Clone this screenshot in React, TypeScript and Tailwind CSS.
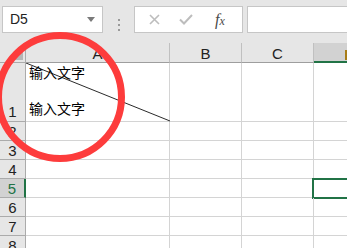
import React from 'react';

const COLS = [
  { key: 'A', w: 'w-[144px]' },
  { key: 'B', w: 'w-[72px]' },
  { key: 'C', w: 'w-[72px]' },
];

const ROWS = [2, 3, 4, 5, 6, 7, 8];

export default function App() {
  return (
    <div
      className="relative w-[347px] h-[248px] overflow-hidden bg-white text-black"
      style={{ fontFamily: '"Liberation Sans", "Noto Sans CJK SC", sans-serif' }}
    >
      <Toolbar />
      <Sheet />
      {/* red annotation circle drawn over the sheet */}
      <svg className="absolute left-0 top-0 pointer-events-none" width="347" height="248">
        <circle cx="60" cy="97" r="61.5" fill="none" stroke="#fd3c3c" strokeWidth="7" />
      </svg>
    </div>
  );
}

function Toolbar() {
  return (
    <div className="flex h-[43px] bg-[#e6e6e6] pt-[6px]">
      <div className="ml-[2px] flex h-[27px] w-[101px] items-center justify-between border border-[#c6c6c6] bg-white pl-[7px] pr-[7px]">
        <span className="text-[14px] text-[#222]">D5</span>
        <svg width="8" height="5" viewBox="0 0 8 5">
          <path d="M0 0 L8 0 L4 5 Z" fill="#7a7a7a" />
        </svg>
      </div>
      <div className="flex w-[31px] flex-col items-center justify-center gap-[3px]">
        <span className="h-[2px] w-[2px] bg-[#9a9a9a]" />
        <span className="h-[2px] w-[2px] bg-[#9a9a9a]" />
        <span className="h-[2px] w-[2px] bg-[#9a9a9a]" />
      </div>
      <div className="flex h-[27px] w-[109px] items-center border border-[#c6c6c6] bg-white">
        <svg className="ml-[14px]" width="11" height="11" viewBox="0 0 11 11">
          <path d="M1 1 L10 10 M10 1 L1 10" stroke="#bdbdbd" strokeWidth="1.6" />
        </svg>
        <svg className="ml-[19px]" width="14" height="11" viewBox="0 0 14 11">
          <path d="M1 5.5 L5 9.5 L13 1" fill="none" stroke="#bdbdbd" strokeWidth="2" />
        </svg>
        <span
          className="ml-[22px] text-[16px] italic leading-none text-[#4a4a4a]"
          style={{ fontFamily: '"Liberation Serif", serif' }}
        >
          f<span className="text-[12px]">x</span>
        </span>
      </div>
      <div className="ml-[4px] h-[27px] flex-1 border border-r-0 border-[#c6c6c6] bg-white" />
    </div>
  );
}

function Sheet() {
  return (
    <div className="flex flex-col">
      {/* column headers */}
      <div className="flex h-[20px] bg-[#e6e6e6]">
        <div className="relative w-[26px] shrink-0 border-b border-r border-[#ababab]">
          <svg className="absolute bottom-[2px] right-[2px]" width="9" height="9" viewBox="0 0 9 9">
            <path d="M9 0 L9 9 L0 9 Z" fill="#b6b6b6" />
          </svg>
        </div>
        {COLS.map((c) => (
          <div
            key={c.key}
            className={`${c.w} shrink-0 flex items-end justify-center border-b border-r border-[#9e9e9e] border-r-[#c0c0c0] pb-[1px] text-[15px] leading-none text-[#222]`}
          >
            {c.key}
          </div>
        ))}
        <div className="flex flex-1 items-end justify-end border-b-2 border-[#217346] bg-[#d2d2d2]">
          <span className="mb-[1px] h-[10px] w-[2px] bg-[#a87d18]" />
        </div>
      </div>

      {/* row 1: tall cell with diagonal */}
      <div className="flex h-[59px]">
        <div className="flex w-[26px] shrink-0 items-end justify-center border-b border-r border-[#ababab] bg-[#e6e6e6] text-[15px] leading-none text-[#222] pb-[2px]">
          1
        </div>
        <div className="relative flex w-[144px] shrink-0 flex-col justify-between border-b border-r border-[#d4d4d4] pl-[3px] pt-[1px] pb-[3px] text-[14px] leading-[18px]">
          <svg className="absolute left-0 top-0" width="144" height="59">
            <line x1="0" y1="0" x2="144" y2="58" stroke="#2a2a2a" strokeWidth="1" />
          </svg>
          <span className="relative">输入文字</span>
          <span className="relative">输入文字</span>
        </div>
        {COLS.slice(1).map((c) => (
          <div key={c.key} className={`${c.w} shrink-0 border-b border-r border-[#d4d4d4]`} />
        ))}
        <div className="flex-1 border-b border-[#d4d4d4]" />
      </div>

      {ROWS.map((r) => {
        const sel = r === 5;
        return (
          <div key={r} className="flex h-[19px]">
            <div
              className={`flex w-[26px] shrink-0 items-end justify-center border-b text-[15px] leading-none pb-[1px] ${
                sel
                  ? 'border-r-2 border-b-[#ababab] border-r-[#217346] bg-[#d2d2d2] text-[#217346]'
                  : 'border-r border-[#ababab] bg-[#e6e6e6] text-[#222]'
              }`}
            >
              {r}
            </div>
            {COLS.map((c) => (
              <div key={c.key} className={`${c.w} shrink-0 border-b border-r border-[#d4d4d4]`} />
            ))}
            <div
              className={`flex-1 ${
                sel ? '-mt-[1px] -ml-[2px] h-[21px] border-2 border-r-0 border-[#217346]' : 'border-b border-[#d4d4d4]'
              }`}
            />
          </div>
        );
      })}
    </div>
  );
}
